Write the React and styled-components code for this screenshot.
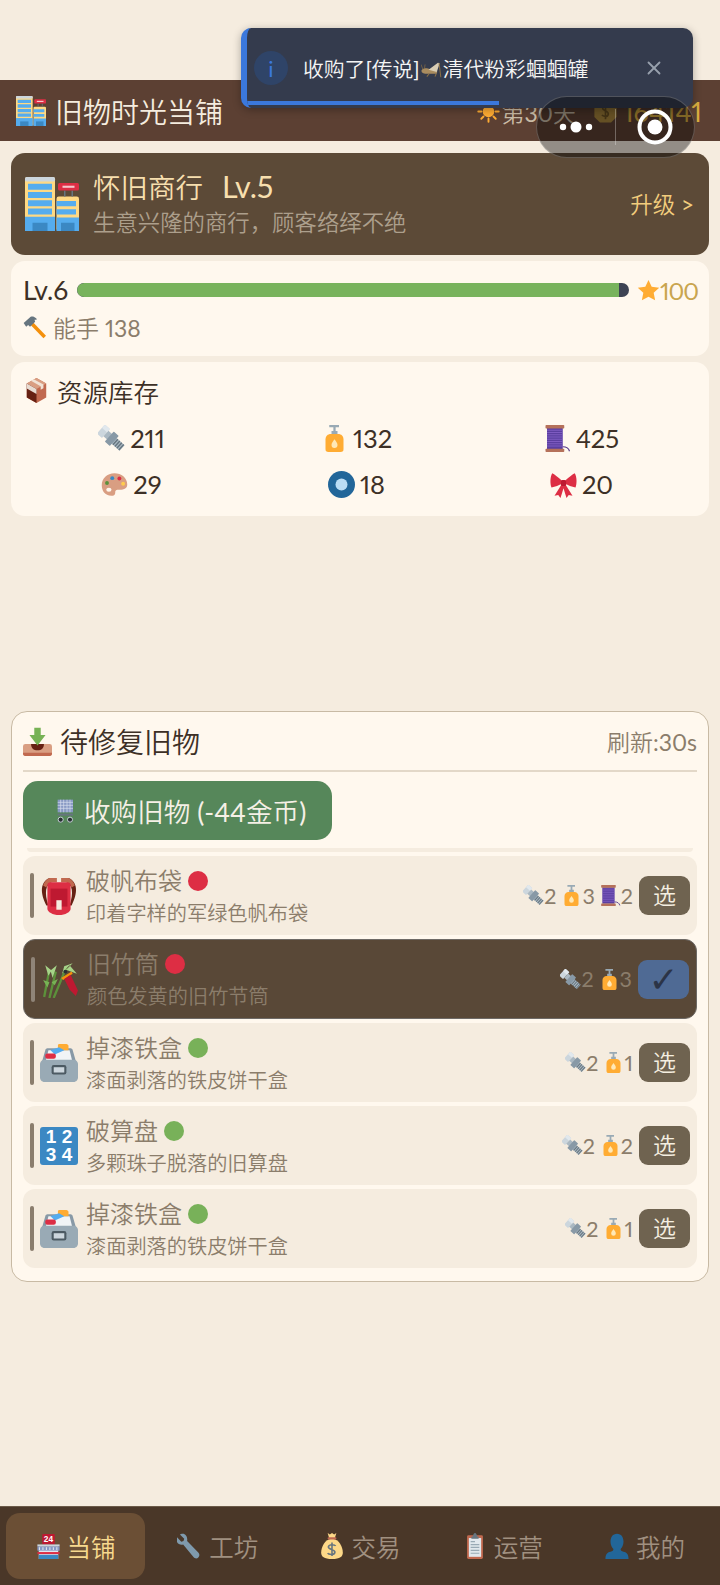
import React from "react";
import styled, { createGlobalStyle } from "styled-components";
import { X } from "lucide-react";

const GlobalStyle = createGlobalStyle`
  html, body {
    margin: 0;
    padding: 0;
    background: #f5ecdf;
  }
  body {
    font-family: Lato, "Noto Sans CJK SC DemiLight", "Noto Sans CJK SC", sans-serif;
    font-variant-numeric: proportional-nums;
    color: #3d3026;
  }
`;

const Page = styled.div`
  position: relative;
  width: 720px;
  height: 1585px;
  overflow: hidden;
  display: flex;
  flex-direction: column;
  padding-top: 80px;
  box-sizing: border-box;
  background: #f5ecdf;
`;

const Header = styled.header`
  height: 61px;
  flex: none;
  display: flex;
  align-items: center;
  justify-content: space-between;
  padding: 0 18px 0 16px;
  background: #5c4033;
`;

const HeaderTitle = styled.div`
  display: flex;
  align-items: center;
  gap: 9px;
  font-size: 28px;
  color: #f5ecdf;
`;

const HeaderStats = styled.div`
  display: flex;
  align-items: center;
  padding-top: 2px;
`;

const Day = styled.span`
  margin-left: 2px;
  font-size: 23px;
  color: #c9bba6;
  margin-right: 17px;
`;

const Gold = styled.span`
  font-size: 27px;
  color: #d8ac3f;
  margin-left: 5px;
`;

const Main = styled.main`
  flex: 1;
  display: flex;
  flex-direction: column;
  gap: 6px;
  padding: 12px 11px 0 11px;
`;

const ShopCard = styled.section`
  height: 102px;
  display: flex;
  align-items: center;
  gap: 14px;
  padding: 0 15px 0 14px;
  border-radius: 14px;
  background: #5c4a37;
`;

const ShopInfo = styled.div`
  flex: 1;
  display: flex;
  flex-direction: column;
  gap: 1px;
  padding-bottom: 3px;
`;

const ShopName = styled.div`
  font-size: 27.5px;
  line-height: 38px;
  color: #f7dfae;
  white-space: pre;
`;

const ShopLevel = styled.span`
  margin-left: 5px;
  font-size: 30.5px;
`;

const ShopDesc = styled.div`
  font-size: 22.4px;
  line-height: 30px;
  color: #ac9f8c;
`;

const UpgradeLink = styled.span`
  padding-bottom: 3px;
  font-size: 22.5px;
  color: #f2cd7d;
`;

const Card = styled.section`
  border-radius: 14px;
  background: #fff8ee;
`;

const ExpCard = styled(Card)`
  height: 95px;
  padding: 13px 11px 0 12px;
  box-sizing: border-box;
`;

const ExpRow = styled.div`
  display: flex;
  align-items: center;
  height: 32px;
  font-size: 26.5px;
`;

const ExpBar = styled.div`
  flex: 1;
  height: 14px;
  margin: 0 8px 0 9px;
  border-radius: 7px;
  overflow: hidden;
  background: #3d4353;
`;

const ExpFill = styled.div`
  height: 100%;
  border-radius: 7px 0 0 7px;
  background: #78b35c;
`;

const ExpMax = styled.span`
  font-size: 24px;
  letter-spacing: -1px;
  color: #c9a54e;
`;

const SkillRow = styled.div`
  display: flex;
  align-items: center;
  gap: 7px;
  margin-top: 4px;
  font-size: 23px;
  color: #8b7d6b;
`;

const StockCard = styled(Card)`
  height: 154px;
  padding: 12px 15px 0 8px;
  box-sizing: border-box;
`;

const StockTitle = styled.div`
  display: flex;
  align-items: center;
  gap: 8px;
  padding-left: 5px;
  height: 32px;
  font-size: 25.5px;
`;

const StockGrid = styled.div`
  display: grid;
  grid-template-columns: repeat(3, 1fr);
  grid-auto-rows: 46px;
  margin-top: 9px;
`;

const StockItem = styled.div`
  display: flex;
  align-items: center;
  justify-content: center;
  gap: 5px;
  font-size: 25.5px;
`;

const Panel = styled(Card)`
  margin-top: 189px;
  height: 571px;
  padding: 0 11px 0 11px;
  box-sizing: border-box;
  border: 1px solid #c8baa4;
  border-radius: 16px;
`;

const PanelHead = styled.div`
  height: 58px;
  display: flex;
  align-items: center;
  justify-content: space-between;
  border-bottom: 2px solid #e3d8c8;
`;

const PanelTitle = styled.div`
  display: flex;
  align-items: center;
  gap: 8px;
  font-size: 28px;
`;

const RefreshNote = styled.span`
  font-size: 23px;
  color: #8b7d6b;
`;

const BuyButton = styled.button`
  display: flex;
  align-items: center;
  gap: 7px;
  width: 309px;
  height: 59px;
  margin-top: 9px;
  padding: 0 0 0 30px;
  border: none;
  border-radius: 15px;
  font: inherit;
  font-size: 26.6px;
  color: #f5f0e6;
  background: #56875a;
`;

const ClippedRow = styled.div`
  height: 4px;
  margin: 8px 4px 4px;
  border-radius: 0 0 8px 8px;
  background: #f5ecdf;
`;

const ItemList = styled.div`
  display: flex;
  flex-direction: column;
  gap: 4px;
`;

const ItemRow = styled.div`
  height: ${(p) => (p.$selected ? "80px" : "79px")};
  display: flex;
  align-items: center;
  padding: 0 7px;
  box-sizing: border-box;
  border-radius: 12px;
  background: ${(p) => (p.$selected ? "#594837" : "#f5ecdf")};
  border: ${(p) => (p.$selected ? "1px solid #6e6a66" : "none")};
`;

const RowStripe = styled.div`
  flex: none;
  width: 4px;
  height: 45px;
  border-radius: 2px;
  margin-right: 6px;
  background: ${(p) => (p.$selected ? "#8f8478" : "#8a7d6d")};
`;

const ItemInfo = styled.div`
  flex: 1;
  margin-left: 8px;
  padding-bottom: 2px;
`;

const ItemName = styled.div`
  display: flex;
  align-items: center;
  gap: 6px;
  font-size: 24px;
  line-height: 36px;
  color: #8b7d6b;
`;

const RarityDot = styled.span`
  width: 20px;
  height: 20px;
  border-radius: 50%;
  background: ${(p) => p.$color};
`;

const ItemDesc = styled.div`
  font-size: 20.2px;
  line-height: 28px;
  color: #8b7d6b;
`;

const CostList = styled.div`
  display: flex;
  align-items: center;
  gap: 5px;
  margin-right: 6px;
`;

const Cost = styled.span`
  display: flex;
  align-items: center;
  font-size: 21.5px;
  color: #8b7d6b;
`;

const PickButton = styled.button`
  width: 51px;
  height: 39px;
  padding: 0;
  border: none;
  border-radius: 9px;
  font: inherit;
  font-size: ${(p) => (p.$selected ? "36px" : "23px")};
  line-height: 39px;
  font-family: ${(p) => (p.$selected ? '"DejaVu Sans", sans-serif' : "inherit")};
  color: ${(p) => (p.$selected ? "#2b3447" : "#f5efe0")};
  background: ${(p) => (p.$selected ? "#4f6a94" : "#6f6350")};
`;

const NumberTile = styled.div`
  flex: none;
  width: 38px;
  height: 38px;
  display: grid;
  grid-template-columns: 1fr 1fr;
  align-content: center;
  justify-items: center;
  padding: 0 3px;
  box-sizing: border-box;
  border-radius: 3px;
  font-family: "Liberation Sans", sans-serif;
  font-size: 19px;
  font-weight: 700;
  line-height: 18px;
  color: #fff;
  background: #3b88c3;
`;

const TabBar = styled.nav`
  height: 79px;
  flex: none;
  display: grid;
  grid-template-columns: repeat(5, 1fr);
  gap: 3px;
  padding: 6px 6px;
  box-sizing: border-box;
  border-top: 1px solid #6b5a48;
  background: #4a3728;
`;

const Tab = styled.div`
  display: flex;
  align-items: center;
  justify-content: center;
  gap: 6px;
  border-radius: 14px;
  font-size: 24.5px;
  color: ${(p) => (p.$active ? "#f7d98e" : "#a09080")};
  background: ${(p) => (p.$active ? "#6b4f35" : "transparent")};
`;

const Toast = styled.div`
  position: absolute;
  top: 28px;
  left: 241px;
  width: 452px;
  height: 80px;
  display: flex;
  align-items: center;
  box-sizing: border-box;
  padding-left: 7px;
  overflow: hidden;
  border-radius: 10px;
  border-left: 6px solid #3b78dc;
  background: #343b4d;
  box-shadow: 0 2px 8px rgba(0, 0, 0, 0.3);
`;

const ToastIcon = styled.div`
  width: 34px;
  height: 34px;
  flex: none;
  display: flex;
  align-items: center;
  justify-content: center;
  border-radius: 50%;
  font-size: 22px;
  color: #3b78dc;
  background: #2f4468;
`;

const ToastText = styled.div`
  flex: 1;
  display: flex;
  align-items: center;
  gap: 1px;
  margin-left: 15px;
  font-size: 20.8px;
  color: #f5f5f5;
`;

const ToastClose = styled.span`
  display: flex;
  margin-right: 28px;
  color: #98a0ad;
`;

const ToastProgress = styled.div`
  position: absolute;
  left: 0;
  bottom: 3px;
  height: 4px;
  background: #3b78dc;
`;

const Capsule = styled.div`
  position: absolute;
  top: 96px;
  left: 536px;
  width: 159px;
  height: 62px;
  box-sizing: border-box;
  display: flex;
  align-items: center;
  border-radius: 31px;
  border: 1px solid rgba(255, 255, 255, 0.22);
  background: rgba(0, 0, 0, 0.4);
`;

const CapsuleSide = styled.div`
  flex: 1;
  display: flex;
  align-items: center;
  justify-content: center;
`;

const CapsuleLine = styled.div`
  width: 1px;
  height: 36px;
  background: rgba(255, 255, 255, 0.3);
`;

const EmojiSvg = styled.svg`
  display: block;
  flex: none;
  width: ${(p) => p.$size}px;
  height: ${(p) => p.$size}px;
`;

const drawings = {
  office: (
    <>
      <rect x="0" y="0" width="20" height="36" rx="1.5" fill="#ffd983" />
      <rect x="0" y="0" width="20" height="3" rx="1" fill="#ccd6dd" />
      <path d="M2 4.5h16v4H2zM2 10h16v4H2zM2 15.5h16v4H2zM2 21h16v4H2z" fill="#55acee" />
      <rect x="0" y="26.5" width="20" height="9.5" fill="#55acee" />
      <rect x="5" y="30.5" width="10" height="5.5" fill="#3b88c3" />
      <rect x="21" y="13" width="15" height="23" rx="1.5" fill="#ffd983" />
      <path d="M21 16h13v3.5H21zM21 21.5h13v3.5H21z" fill="#55acee" />
      <rect x="21" y="27" width="15" height="9" fill="#55acee" />
      <rect x="24" y="30.5" width="9" height="5.5" fill="#3b88c3" />
      <path d="M26 9h1v4h-1zM31 9h1v4h-1z" fill="#66757f" />
      <rect x="22" y="4" width="14" height="5" rx="1" fill="#dd2e44" />
      <path d="M25 5.8h8v1.4h-8z" fill="#f5c6cc" />
    </>
  ),
  sun: (
    <>
      <circle cx="18" cy="18" r="9" fill="#ffac33" />
      <path
        d="M18 2v5M18 29v5M2 18h5M29 18h5M6.7 6.7l3.5 3.5M25.8 25.8l3.5 3.5M6.7 29.3l3.5-3.5M25.8 10.2l3.5-3.5"
        stroke="#ffac33"
        strokeWidth="3"
        strokeLinecap="round"
      />
    </>
  ),
  coin: (
    <>
      <path d="M10 2h16l8 8v16l-8 8H10l-8-8V10z" fill="#a8853c" />
      <path
        d="M23 12c-1-2-8-3-9 1s9 4 8 9-8 3-9 1M18 7v22"
        stroke="#6b5223"
        strokeWidth="2.4"
        fill="none"
      />
    </>
  ),
  cricket: (
    <>
      <path d="M1 21c2-3 6-4 11-3l16 5-1 4H9c-5 0-9-2-8-6z" fill="#a98c5f" />
      <path d="M13 20L29 8l3 1-5 15z" fill="#d9cdb4" />
      <path d="M3 19L0 11M6 18l1-7" stroke="#8a6f45" strokeWidth="1.2" />
      <path d="M26 27l-2 5M14 27l-4 5M31 9l3 24" stroke="#8a6f45" strokeWidth="1.800" />
    </>
  ),
  hammer: (
    <>
      <path d="M12 14l4-4 20 21-4 4z" fill="#f4900c" />
      <path d="M1 11L12 1c3-1 6 0 8 2l2 2-2 1-2 0 1 3-8 8-3-3-3 3z" fill="#66757f" />
    </>
  ),
  star: (
    <path
      d="M18 1.5l5 10.8 11.8 1.4-8.7 8 2.3 11.600L18 27.6 7.6 33.3l2.3-11.600-8.700-8L13 12.300z"
      fill="#ffac33"
    />
  ),
  box: (
    <>
      <path d="M18 0l14 8v20l-14 8-14-8V8z" fill="#c1694f" />
      <path d="M18 0l14 8-14 8L4 8z" fill="#d99e82" />
      <path d="M4 8l14 8v20L4 28z" fill="#662113" />
      <path d="M4 8l14 8v7L4 15z" fill="#e8dcd2" />
      <path d="M10 3.800l14 8v5l4-2v-5.500L14 1.800z" fill="#f1e3d6" />
    </>
  ),
  bolt: (
    <g transform="rotate(42 18 18)">
      <rect x="-1" y="10" width="9" height="16" rx="1" fill="#ccd6dd" />
      <rect x="8" y="13" width="29" height="10" fill="#aab8c2" />
      <rect x="14" y="9" width="9" height="18" rx="1" fill="#8899a6" />
      <path d="M25 13v10M28.500 13v10M32 13v10M35.500 13v10" stroke="#66757f" strokeWidth="1.800" />
      <rect x="-1" y="10" width="9" height="6" fill="#e1e8ed" />
    </g>
  ),
  lotion: (
    <>
      <path d="M11 0h13v3h-4.500v5H22v5h-8V8h2.500V3H11z" fill="#99aab5" />
      <path d="M10 36c-3 0-4-1-4-4V19c0-4 3-7 7-7h10c4 0 7 3 7 7v13c0 3-1 4-4 4z" fill="#ffac33" />
      <path d="M18 19c-2 3-4 5-4 7.500a4 4 0 0 0 8 0C22 24 20 22 18 19z" fill="#ffe8b6" />
    </>
  ),
  thread: (
    <>
      <rect x="4" y="4" width="21" height="28" fill="#5b3fa0" />
      <path
        d="M4 7h21M4 10h21M4 13h21M4 16h21M4 19h21M4 22h21M4 25h21M4 28h21"
        stroke="#8a66cc"
        strokeWidth="1"
      />
      <rect x="2" y="0" width="25" height="4.500" rx="1" fill="#b5715a" />
      <rect x="2" y="31.500" width="25" height="4.500" rx="1" fill="#b5715a" />
      <path d="M25 29c5 0 8 2 9 6" stroke="#553788" strokeWidth="1.500" fill="none" />
    </>
  ),
  palette: (
    <>
      <path
        d="M18 3C8 3 1 10 1 19c0 7 4 14 13 14 5 0 5-3 5-5 0-3 3-3 6-3 6 0 10-2 10-7 0-9-8-15-17-15z"
        fill="#d99e82"
      />
      <circle cx="8" cy="16" r="2.600" fill="#5c913b" />
      <circle cx="15" cy="9.500" r="2.600" fill="#3b88c3" />
      <circle cx="24.500" cy="10" r="2.600" fill="#dd2e44" />
      <circle cx="29.500" cy="17" r="2.600" fill="#ffcc4d" />
      <ellipse cx="10.500" cy="25" rx="3.500" ry="2.600" fill="#fff8ee" />
    </>
  ),
  ring: (
    <>
      <circle cx="18" cy="18" r="18" fill="#226699" />
      <circle cx="18" cy="18" r="8" fill="#bbddf5" />
    </>
  ),
  bow: (
    <>
      <path d="M16 13C10 8 6 4 3 3 0 8 0 17 2 22c5-1 10-3 14-5z" fill="#dd2e44" />
      <path d="M20 13c6-5 10-9 13-10 3 5 3 14 1 19-5-1-10-3-14-5z" fill="#dd2e44" />
      <path d="M16 17L6 33l5-1 3 4 4-13 4 13 3-4 5 1-10-16z" fill="#dd2e44" />
      <rect x="14.500" y="12" width="7" height="8" rx="2" fill="#be1931" />
    </>
  ),
  inbox: (
    <>
      <rect x="0" y="21" width="36" height="15" rx="3" fill="#d99e82" />
      <path d="M0 32h36v1c0 2-1 3-3 3H3c-2 0-3-1-3-3z" fill="#c1694f" />
      <path d="M10 21h16c0 5-3 8-8 8s-8-3-8-8z" fill="#662113" />
      <path d="M14 1h8v9h6L18 23 8 10h6z" fill="#77b255" />
    </>
  ),
  cart: (
    <>
      <rect x="7" y="1" width="23" height="19" fill="#8899c4" />
      <path
        d="M7 5h23M7 9.500h23M7 14h23M11.500 1v19M16 1v19M21 1v19M25.500 1v19"
        stroke="#d9e0ee"
        strokeWidth="1"
      />
      <rect x="7" y="22" width="23" height="3" fill="#66757f" />
      <circle cx="11.500" cy="31" r="3.800" fill="#292f33" stroke="#ccd6dd" strokeWidth="1.400" />
      <circle cx="25.500" cy="31" r="3.800" fill="#292f33" stroke="#ccd6dd" strokeWidth="1.400" />
    </>
  ),
  backpack: (
    <>
      <path d="M6 27C0 15 0 5 9 1h3v3C5 7 4 15 8 27z" fill="#662113" />
      <path d="M30 27c6-12 6-22-3-26h-3v3c7 3 8 11 4 23z" fill="#662113" />
      <path d="M9 1h7v4h-4C9 5 7 7 6 10L3 8c1-3 3-6 6-7zM27 1h-7v4h4c3 0 5 2 6 5l3-2c-1-3-3-6-6-7z" fill="#c1694f" />
      <path d="M7 8c0-2 1-3 3-3h16c2 0 3 1 3 3v22c0 3-5 6-11 6S7 33 7 30z" fill="#dd2e44" />
      <path d="M10 11h16v17H10z" fill="#be1931" />
      <rect x="15.500" y="22" width="5" height="9" fill="#f5ecdf" />
    </>
  ),
  bamboo: (
    <>
      <path d="M3 35L8 9M8 36L14 11M12 36L24 7" stroke="#5c913b" strokeWidth="2.200" fill="none" />
      <path d="M7 15L4 5l6 5zM11 17L9 10l6-5zM20 13l2-7 8-3zM23 9l11 4-7-8z" fill="#a6d388" />
      <path d="M6 26L2 19l6 2zM13 24l3-6-6 3z" fill="#77b255" />
      <circle cx="23" cy="11" r="1.800" fill="#292f33" />
      <path d="M19 17l10-6 1 2-9 6z" fill="#f4900c" />
      <path d="M22 18l6-4 7 15-2 5-6-6z" fill="#be1931" />
    </>
  ),
  filebox: (
    <>
      <path d="M7 4h22c1 0 2 1 2 2l4 14H1L5 6c0-1 1-2 2-2z" fill="#8899a6" />
      <path d="M8 6h20l3 12H5z" fill="#f1f4f6" />
      <path d="M17 1c0-1 1-1 2-1h6c1 0 2 1 2 2v4H17z" fill="#ffac33" />
      <path d="M10 6l8-3 5 3-9 4z" fill="#55acee" />
      <rect x="5" y="9" width="10" height="5" rx="2" fill="#dd2e44" />
      <path d="M4 15h28c2 0 4 2 4 4v13c0 2-2 4-4 4H4c-2 0-4-2-4-4V19c0-2 2-4 4-4z" fill="#99aab5" />
      <rect x="11" y="20" width="14" height="9" rx="2" fill="#4c5a63" />
      <rect x="13" y="22" width="10" height="5" fill="#ccd6dd" />
    </>
  ),
  store: (
    <>
      <rect x="9" y="0" width="18" height="15" rx="1" fill="#be1931" />
      <rect x="4" y="18" width="28" height="18" fill="#e1e8ed" />
      <path d="M2 15h32v3H2z" fill="#ccd6dd" />
      <path d="M2 18h32v6H2z" fill="#8899c4" />
      <path d="M5 19v4M10 19v4M15 19v4M20 19v4M25 19v4M30 19v4" stroke="#e1e8ed" strokeWidth="1.500" />
      <rect x="2" y="26" width="32" height="3" fill="#dd2e44" />
      <rect x="4" y="30" width="28" height="6" fill="#3b88c3" />
    </>
  ),
  wrench: (
    <path
      d="M8 1c-2 0-3 .5-4 1l6 6-1 3-3 1-6-6c-.5 1-1 3-.5 5 1 4 5 6 9 5l14 17c2 2.500 5 3 7 1s2-5 0-7L14 11c1-5-2-10-6-10z"
      fill="#7f9aad"
    />
  ),
  money: (
    <>
      <path d="M18 8C8 8 3 20 3 27c0 6 4 9 15 9s15-3 15-9c0-7-5-19-15-19z" fill="#fdd888" />
      <path d="M12 0l3 2 3-2 3 2 3-2-2 7H14z" fill="#fdd888" />
      <rect x="12" y="6" width="12" height="3" rx="1" fill="#bf6952" />
      <path
        d="M23 18c-1-2-9-3-10 1s10 4 9 8-9 3-10 1M18 13v19"
        stroke="#67757f"
        strokeWidth="2.200"
        fill="none"
      />
    </>
  ),
  clipboard: (
    <>
      <rect x="7" y="3" width="22" height="33" rx="2" fill="#c1694f" />
      <rect x="9.500" y="7" width="17" height="26" fill="#e1e8ed" />
      <path d="M12 12h6M12 16h12M12 20h12M12 24h12M12 28h12" stroke="#99aab5" strokeWidth="1.600" />
      <path d="M15 5c0-2 1.500-5 3-5s3 3 3 5h2v3H13V5z" fill="#66757f" />
    </>
  ),
  bust: (
    <path
      d="M18 1c6 0 9 5 9 11 0 4-2 8-4 10 0 2 1 3 4 4 5 1 7 4 7 10H2c0-6 2-9 7-10 3-1 4-2 4-4-2-2-4-6-4-10 0-6 3-11 9-11z"
      fill="#269"
    />
  ),
};

const Emoji = ({ name, size = 24 }) => (
  <EmojiSvg $size={size} viewBox="0 0 36 36">
    {drawings[name]}
  </EmojiSvg>
);

const StoreIcon = () => (
  <EmojiSvg $size={25} viewBox="0 0 36 36">
    {drawings.store}
    <text x="18" y="12" fill="#fff" fontSize="12" fontWeight="700" textAnchor="middle" fontFamily="Liberation Sans, sans-serif">
      24
    </text>
  </EmojiSvg>
);

const stock = [
  ["bolt", 211],
  ["lotion", 132],
  ["thread", 425],
  ["palette", 29],
  ["ring", 18],
  ["bow", 20],
];

const items = [
  {
    icon: "backpack",
    name: "破帆布袋",
    rarity: "#dd2e44",
    desc: "印着字样的军绿色帆布袋",
    cost: [["bolt", 2], ["lotion", 3], ["thread", 2]],
  },
  {
    icon: "bamboo",
    name: "旧竹筒",
    rarity: "#dd2e44",
    desc: "颜色发黄的旧竹节筒",
    cost: [["bolt", 2], ["lotion", 3]],
    selected: true,
  },
  {
    icon: "filebox",
    name: "掉漆铁盒",
    rarity: "#78b159",
    desc: "漆面剥落的铁皮饼干盒",
    cost: [["bolt", 2], ["lotion", 1]],
  },
  {
    icon: "numbers",
    name: "破算盘",
    rarity: "#78b159",
    desc: "多颗珠子脱落的旧算盘",
    cost: [["bolt", 2], ["lotion", 2]],
  },
  {
    icon: "filebox",
    name: "掉漆铁盒",
    rarity: "#78b159",
    desc: "漆面剥落的铁皮饼干盒",
    cost: [["bolt", 2], ["lotion", 1]],
  },
];

const tabs = [
  ["store", "当铺", true],
  ["wrench", "工坊"],
  ["money", "交易"],
  ["clipboard", "运营"],
  ["bust", "我的"],
];

const App = () => {
  return (
    <Page>
      <GlobalStyle />
      <Header>
        <HeaderTitle>
          <Emoji name="office" size={30} />
          旧物时光当铺
        </HeaderTitle>
        <HeaderStats>
          <Emoji name="sun" size={23} />
          <Day>第30天</Day>
          <Emoji name="coin" size={25} />
          <Gold>164141</Gold>
        </HeaderStats>
      </Header>

      <Main>
        <ShopCard>
          <Emoji name="office" size={54} />
          <ShopInfo>
            <ShopName>
              怀旧商行  <ShopLevel>Lv.5</ShopLevel>
            </ShopName>
            <ShopDesc>生意兴隆的商行，顾客络绎不绝</ShopDesc>
          </ShopInfo>
          <UpgradeLink>升级 &gt;</UpgradeLink>
        </ShopCard>

        <ExpCard>
          <ExpRow>
            Lv.6
            <ExpBar>
              <ExpFill style={{ width: `${(542 / 552) * 100}%` }} />
            </ExpBar>
            <Emoji name="star" size={23} />
            <ExpMax>100</ExpMax>
          </ExpRow>
          <SkillRow>
            <Emoji name="hammer" size={23} />
            能手 138
          </SkillRow>
        </ExpCard>

        <StockCard>
          <StockTitle>
            <Emoji name="box" size={25} />
            资源库存
          </StockTitle>
          <StockGrid>
            {stock.map(([icon, count]) => (
              <StockItem key={icon}>
                <Emoji name={icon} size={27} />
                {count}
              </StockItem>
            ))}
          </StockGrid>
        </StockCard>

        <Panel>
          <PanelHead>
            <PanelTitle>
              <Emoji name="inbox" size={29} />
              待修复旧物
            </PanelTitle>
            <RefreshNote>刷新:30s</RefreshNote>
          </PanelHead>
          <BuyButton>
            <Emoji name="cart" size={24} />
            收购旧物 (-44金币)
          </BuyButton>
          <ClippedRow />
          <ItemList>
            {items.map((item, i) => (
              <ItemRow key={i} $selected={item.selected}>
                <RowStripe $selected={item.selected} />
                {item.icon === "numbers" ? (
                  <NumberTile>
                    <span>1</span>
                    <span>2</span>
                    <span>3</span>
                    <span>4</span>
                  </NumberTile>
                ) : (
                  <Emoji name={item.icon} size={38} />
                )}
                <ItemInfo>
                  <ItemName>
                    {item.name}
                    <RarityDot $color={item.rarity} />
                  </ItemName>
                  <ItemDesc>{item.desc}</ItemDesc>
                </ItemInfo>
                <CostList>
                  {item.cost.map(([icon, n]) => (
                    <Cost key={icon}>
                      <Emoji name={icon} size={21} />
                      {n}
                    </Cost>
                  ))}
                </CostList>
                <PickButton $selected={item.selected}>{item.selected ? "✓" : "选"}</PickButton>
              </ItemRow>
            ))}
          </ItemList>
        </Panel>
      </Main>

      <TabBar>
        {tabs.map(([icon, label, active]) => (
          <Tab key={label} $active={active}>
            {icon === "store" ? <StoreIcon /> : <Emoji name={icon} size={26} />}
            {label}
          </Tab>
        ))}
      </TabBar>

      <Toast>
        <ToastIcon>i</ToastIcon>
        <ToastText>
          收购了[传说]
          <Emoji name="cricket" size={21} />
          清代粉彩蝈蝈罐
        </ToastText>
        <ToastClose>
          <X size={22} strokeWidth={2} />
        </ToastClose>
        <ToastProgress style={{ width: 252 }} />
      </Toast>

      <Capsule>
        <CapsuleSide>
          <svg width="40" height="14" viewBox="0 0 40 14">
            <circle cx="7" cy="7" r="3.200" fill="#fff" />
            <circle cx="20" cy="7" r="5.500" fill="#fff" />
            <circle cx="33" cy="7" r="3.200" fill="#fff" />
          </svg>
        </CapsuleSide>
        <CapsuleLine />
        <CapsuleSide>
          <svg width="36" height="36" viewBox="0 0 36 36">
            <circle cx="18" cy="18" r="15.500" fill="none" stroke="#fff" strokeWidth="4" />
            <circle cx="18" cy="18" r="7.500" fill="#fff" />
          </svg>
        </CapsuleSide>
      </Capsule>
    </Page>
  );
};

export default App;
